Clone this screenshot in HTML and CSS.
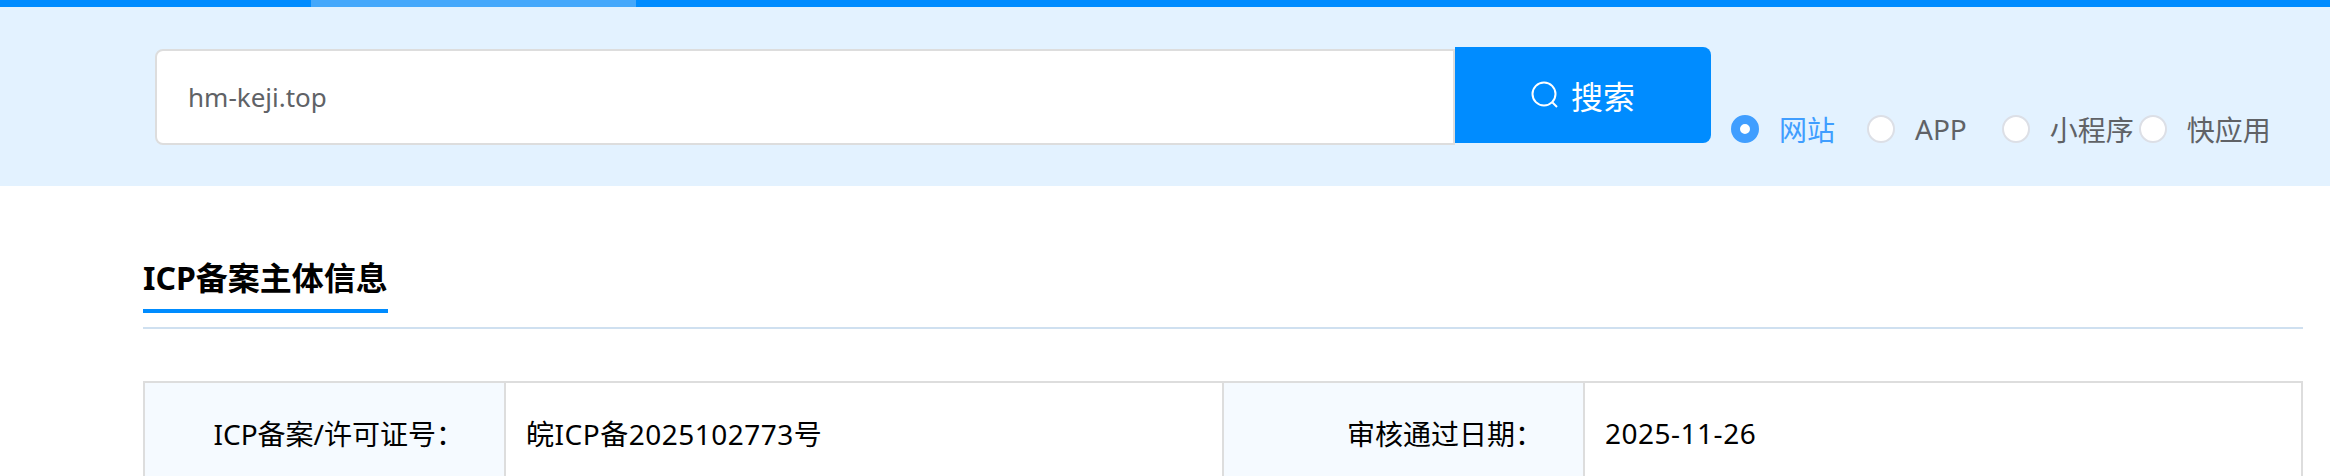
FILE: index.html
```html
<!DOCTYPE html>
<html>
<head>
  <meta charset="UTF-8">
  <title>ICP备案查询</title>
  <link rel="stylesheet" href="styles.css">
</head>
<body>
  <div class="topbar">
    <div class="topbar-active"></div>
  </div>

  <div class="search-band">
    <form class="search-form">
      <input class="search-input" type="text" value="hm-keji.top">
      <button class="search-btn" type="button">
        <svg class="search-icon" width="28" height="28" viewBox="0 0 28 28" fill="none" stroke="#fff" stroke-width="2">
          <circle cx="13" cy="13" r="11.5"/>
          <path d="M21.5 21.5L26 26"/>
        </svg>
        <span>搜索</span>
      </button>
    </form>
    <div class="radio-group">
      <label class="radio radio-on"><i class="radio-dot"></i><span class="radio-text">网站</span></label>
      <label class="radio radio-app"><i class="radio-dot"></i><span class="radio-text">APP</span></label>
      <label class="radio radio-mini"><i class="radio-dot"></i><span class="radio-text">小程序</span></label>
      <label class="radio"><i class="radio-dot"></i><span class="radio-text">快应用</span></label>
    </div>
  </div>

  <div class="container">
    <div class="section-head">
      <h2 class="section-title">ICP备案主体信息</h2>
    </div>

    <table class="info-table">
      <tr>
        <th>ICP备案/许可证号：</th>
        <td>皖ICP备2025102773号</td>
        <th>审核通过日期：</th>
        <td>2025-11-26</td>
      </tr>
    </table>
  </div>
</body>
</html>
```

FILE: styles.css
```css
body {
  margin: 0;
  height: 476px;
  overflow: hidden;
  background-color: #fff;
  font-family: "Noto Sans", "Noto Sans CJK SC", sans-serif;
}

.topbar {
  height: 7px;
  padding-left: 311px;
  background-color: #008cff;
}

.topbar-active {
  width: 325px;
  height: 7px;
  background-color: #45a8fb;
}

.search-band {
  display: flex;
  height: 179px;
  padding-left: 155px;
  background-color: #e3f2ff;
}

.search-form {
  display: flex;
  margin-top: 40px;
  height: 96px;
}

.search-input {
  box-sizing: border-box;
  width: 1300px;
  height: 96px;
  margin-top: 2px;
  padding: 0 31px;
  border: 2px solid #ddd;
  border-radius: 8px 0 0 8px;
  background-color: #fff;
  color: #606266;
  font-family: inherit;
  font-size: 26px;
  outline: none;
}

.search-btn {
  display: flex;
  align-items: center;
  justify-content: center;
  gap: 12px;
  width: 256px;
  height: 96px;
  padding: 0;
  border: 0;
  border-radius: 0 8px 8px 0;
  background-color: #008cff;
  color: #fff;
  font-family: inherit;
  font-size: 32px;
}

.radio-group {
  display: flex;
  margin-left: 20px;
  margin-top: 100px;
  height: 44px;
}

.radio {
  display: flex;
  align-items: center;
  color: #606266;
  font-size: 28px;
  margin-right: 32px;
}

.radio-app {
  margin-right: 35px;
}

.radio-mini {
  margin-right: 5px;
}

.radio-dot {
  box-sizing: border-box;
  width: 28px;
  height: 28px;
  margin-right: 20px;
  border: 2px solid #dcdfe6;
  border-radius: 50%;
  background-color: #fff;
}

.radio-on {
  color: #409eff;
}

.radio-on .radio-dot {
  border: 9px solid #409eff;
}

.container {
  padding: 0 27px 0 143px;
}

.section-head {
  height: 143px;
  margin-bottom: 52px;
  box-sizing: border-box;
  padding-top: 70px;
  border-bottom: 2px solid #cfe0f0;
}

.section-title {
  display: inline-block;
  margin: 0;
  padding-bottom: 9px;
  border-bottom: 4px solid #008cff;
  color: #000;
  font-size: 32px;
  line-height: 44px;
}

.info-table {
  width: 100%;
  border-collapse: collapse;
  table-layout: fixed;
  font-size: 28px;
  color: #000;
}

.info-table th,
.info-table td {
  height: 100px;
  border: 2px solid #ddd;
  font-weight: normal;
  padding: 0 20px;
}

.info-table td {
  letter-spacing: 0.5px;
}

.info-table th {
  width: 299px;
  padding-right: 40px;
  background-color: #f5faff;
  text-align: right;
}
```
